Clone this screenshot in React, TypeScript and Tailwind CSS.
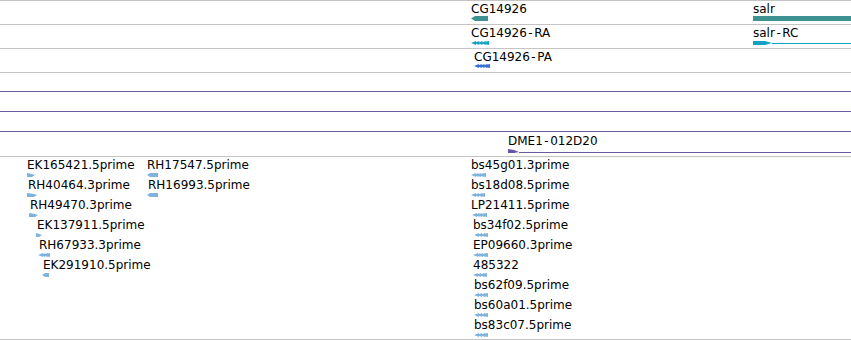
type Dir = 'l' | 'r'

interface Est {
  label: string
  x: number
  gx: number
  gw: number
  dir: Dir
  chev?: boolean
}

// one entry per row of the EST track; each row holds the features laid in it
const EST_ROWS: Est[][] = [
  [
    { label: 'EK165421.5prime', x: 27, gx: 27, gw: 8, dir: 'r' },
    { label: 'RH17547.5prime', x: 147, gx: 147, gw: 11, dir: 'l' },
    { label: 'bs45g01.3prime', x: 471, gx: 471, gw: 15, dir: 'l', chev: true },
  ],
  [
    { label: 'RH40464.3prime', x: 28, gx: 27, gw: 10, dir: 'r' },
    { label: 'RH16993.5prime', x: 148, gx: 147, gw: 11, dir: 'l' },
    { label: 'bs18d08.5prime', x: 471, gx: 471, gw: 14, dir: 'l', chev: true },
  ],
  [
    { label: 'RH49470.3prime', x: 30, gx: 29, gw: 9, dir: 'r' },
    { label: 'LP21411.5prime', x: 471, gx: 472, gw: 15, dir: 'l', chev: true },
  ],
  [
    { label: 'EK137911.5prime', x: 37, gx: 36, gw: 6, dir: 'r' },
    { label: 'bs34f02.5prime', x: 473, gx: 474, gw: 14, dir: 'l', chev: true },
  ],
  [
    { label: 'RH67933.3prime', x: 39, gx: 38, gw: 12, dir: 'l', chev: true },
    { label: 'EP09660.3prime', x: 473, gx: 473, gw: 15, dir: 'l', chev: true },
  ],
  [
    { label: 'EK291910.5prime', x: 43, gx: 42, gw: 7, dir: 'l' },
    { label: '485322', x: 473, gx: 473, gw: 14, dir: 'l', chev: true },
  ],
  [{ label: 'bs62f09.5prime', x: 474, gx: 474, gw: 14, dir: 'l', chev: true }],
  [{ label: 'bs60a01.5prime', x: 474, gx: 474, gw: 14, dir: 'l', chev: true }],
  [{ label: 'bs83c07.5prime', x: 474, gx: 474, gw: 14, dir: 'l', chev: true }],
]

function Chevrons({ w, color }: { w: number; color: string }) {
  const n = Math.max(2, Math.round(w / 3.3))
  const step = (w - 5) / (n - 1)
  return (
    <svg width={w} height={5} className="block">
      {Array.from({ length: n }).map((_, k) => (
        <polygon
          key={k}
          points={`${k * step},2 ${k * step + 5},0 ${k * step + 5},4 `}
          fill={color}
        />
      ))}
      <rect x={w - 3} y={0.5} width={3} height={3} fill={color} />
    </svg>
  )
}

function Wedge({ w, dir, color }: { w: number; dir: Dir; color: string }) {
  const pts =
    dir === 'r'
      ? `0,0 ${w - 3},1 ${w},2 ${w - 3},4 0,4`
      : `0,2 3,0 ${w},0 ${w},4 3,4`
  return (
    <svg width={w} height={5} className="block">
      <polygon points={pts} fill={color} />
    </svg>
  )
}

function Dashed({ a, b }: { a: string; b: string }) {
  return (
    <>
      {a}
      <span className="px-[1.5px]">-</span>
      {b}
    </>
  )
}

// a labelled feature placed on the track at its genomic x
function Feature({
  x,
  gx,
  gap = true,
  children,
  glyph,
}: {
  x: number
  gx?: number
  gap?: boolean
  children: React.ReactNode
  glyph: React.ReactNode
}) {
  return (
    <div
      className={`absolute top-px flex flex-col whitespace-nowrap ${gap ? 'gap-px' : ''}`}
      style={{ left: x }}
    >
      <span>{children}</span>
      <div style={{ marginLeft: (gx ?? x) - x }}>{glyph}</div>
    </div>
  )
}

export default function App() {
  return (
    <div className="flex h-[340px] w-[851px] flex-col overflow-hidden bg-white font-['DejaVu_Sans',sans-serif] text-[12px] leading-[14px] text-black">
      <div className="h-px bg-[#c4c4c4]" />

      {/* gene track */}
      <div className="relative h-[24px] border-b border-[#c4c4c4]">
        <Feature
          x={471}
          gap={false}
          glyph={
            <svg width={17} height={5} className="block">
              <polygon points="0,2.5 4,0 17,0 17,5 4,5" fill="#3f9292" />
            </svg>
          }
        >
          CG14926
        </Feature>
        <div className="absolute left-[753px] right-0 top-px flex flex-col">
          <span>salr</span>
          <div className="h-[5px] bg-[#3f9292]" />
        </div>
      </div>

      {/* transcript track */}
      <div className="relative h-[24px] border-b border-[#c4c4c4]">
        <Feature x={471} glyph={<Chevrons w={18} color="#12a2c4" />}>
          <Dashed a="CG14926" b="RA" />
        </Feature>
        <div className="absolute left-[753px] right-0 top-px flex flex-col gap-px">
          <span>
            <Dashed a="salr" b="RC" />
          </span>
          <div className="flex items-center">
            <svg width={19} height={5} className="block shrink-0">
              <polygon points="0,0 12,0 19,2 12,4 0,4" fill="#12a2c4" />
            </svg>
            <div className="h-px flex-1 bg-[#12a2c4]" />
          </div>
        </div>
      </div>

      {/* protein track */}
      <div className="relative h-[24px] border-b border-[#c4c4c4]">
        <Feature x={474} gap={false} glyph={<Chevrons w={16} color="#3a6fd4" />}>
          <Dashed a="CG14926" b="PA" />
        </Feature>
      </div>

      <div className="h-[19px] border-b border-[#6b5b9b]" />
      <div className="h-[20px] border-b border-[#6b5b9b]" />
      <div className="h-[20px] border-b border-[#6b5b9b]" />

      {/* clone track */}
      <div className="relative h-[25px] border-b border-[#c4c4c4]">
        <div className="absolute left-[508px] right-0 top-[2px] flex flex-col gap-px">
          <span>
            <Dashed a="DME1" b="012D20" />
          </span>
          <div className="flex items-end">
            <svg width={11} height={5} className="block shrink-0">
              <polygon points="0,0 6,1 11,3 6,4 0,4" fill="#6a52a8" />
            </svg>
            <div className="mb-px h-px flex-1 bg-[#6b5b9b]" />
          </div>
        </div>
      </div>

      {/* EST track */}
      <div className="flex h-[183px] flex-col border-b border-[#c4c4c4]">
        {EST_ROWS.map((row, i) => (
          <div key={i} className="relative h-[20px] shrink-0">
            {row.map((e) => (
              <Feature
                key={e.label}
                x={e.x}
                gx={e.gx}
                glyph={
                  e.chev ? (
                    <Chevrons w={e.gw} color="#7fb3dd" />
                  ) : (
                    <Wedge w={e.gw} dir={e.dir} color="#7fb3dd" />
                  )
                }
              >
                {e.label}
              </Feature>
            ))}
          </div>
        ))}
      </div>
    </div>
  )
}
